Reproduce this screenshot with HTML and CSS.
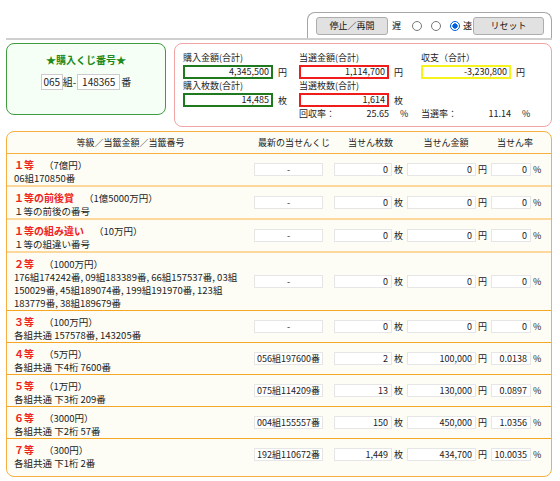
FILE: index.html
```html
<!DOCTYPE html>
<html lang="ja">
<head>
<meta charset="utf-8">
<title>宝くじシミュレーター</title>
<link rel="stylesheet" href="styles.css">
</head>
<body>
<div class="page">
  <div class="topbar">
    <div class="ctrl">
      <button class="btn">停止／再開</button>
      <span class="lbl slow">遅</span>
      <span class="radio first"></span>
      <span class="radio"></span>
      <span class="radio on"></span>
      <span class="lbl fast">速</span>
      <button class="btn reset">リセット</button>
    </div>
  </div>

  <div class="summary">
    <div class="ticket">
      <div class="ticket-title">★購入くじ番号★</div>
      <div class="ticket-num"><span class="tbox w1">065</span>組-<span class="tbox w2">148365</span>番</div>
    </div>
    <div class="stats">
      <div class="lab">購入金額(合計)</div>
      <div class="lab">当選金額(合計)</div>
      <div class="lab">収支（合計）</div>

      <div class="fr"><span class="fld green">4,345,500</span><span class="u">円</span></div>
      <div class="fr"><span class="fld red">1,114,700</span><span class="u">円</span></div>
      <div class="fr"><span class="fld yellow">-3,230,800</span><span class="u">円</span></div>

      <div class="lab">購入枚数(合計)</div>
      <div class="lab">当選枚数(合計)</div>
      <div></div>

      <div class="fr"><span class="fld green">14,485</span><span class="u">枚</span></div>
      <div class="fr"><span class="fld red">1,614</span><span class="u">枚</span></div>
      <div></div>

      <div></div>
      <div class="rate"><span class="rl">回収率：</span><span class="rv">25.65</span><span class="u">%</span></div>
      <div class="rate"><span class="rl">当選率：</span><span class="rv">11.14</span><span class="u">%</span></div>
    </div>
  </div>

  <div class="results">
    <div class="thead">
      <div class="h1">等級／当籤金額／当籤番号</div>
      <div class="h2">最新の当せんくじ</div>
      <div class="h3">当せん枚数</div>
      <div class="h4">当せん金額</div>
      <div class="h5">当せん率</div>
    </div>

    <div class="row light">
      <div class="prize"><div class="pt"><span class="grade">１等</span><span class="amt">（7億円）</span></div><div class="pn">06組170850番</div></div>
      <div class="c2"><span class="box b2">-</span></div>
      <div class="c3"><span class="box b3">0</span><span class="u">枚</span></div>
      <div class="c4"><span class="box b4">0</span><span class="u">円</span></div>
      <div class="c5"><span class="box b5">0</span><span class="u">%</span></div>
    </div>

    <div class="row light">
      <div class="prize"><div class="pt"><span class="grade">１等の前後賞</span><span class="amt">（1億5000万円）</span></div><div class="pn">１等の前後の番号</div></div>
      <div class="c2"><span class="box b2">-</span></div>
      <div class="c3"><span class="box b3">0</span><span class="u">枚</span></div>
      <div class="c4"><span class="box b4">0</span><span class="u">円</span></div>
      <div class="c5"><span class="box b5">0</span><span class="u">%</span></div>
    </div>

    <div class="row light">
      <div class="prize"><div class="pt"><span class="grade">１等の組み違い</span><span class="amt">（10万円）</span></div><div class="pn">１等の組違い番号</div></div>
      <div class="c2"><span class="box b2">-</span></div>
      <div class="c3"><span class="box b3">0</span><span class="u">枚</span></div>
      <div class="c4"><span class="box b4">0</span><span class="u">円</span></div>
      <div class="c5"><span class="box b5">0</span><span class="u">%</span></div>
    </div>

    <div class="row">
      <div class="prize"><div class="pt"><span class="grade">２等</span><span class="amt">（1000万円）</span></div><div class="pn">176組174242番, 09組183389番, 66組157537番, 03組150029番, 45組189074番, 199組191970番, 123組183779番, 38組189679番</div></div>
      <div class="c2"><span class="box b2">-</span></div>
      <div class="c3"><span class="box b3">0</span><span class="u">枚</span></div>
      <div class="c4"><span class="box b4">0</span><span class="u">円</span></div>
      <div class="c5"><span class="box b5">0</span><span class="u">%</span></div>
    </div>

    <div class="row">
      <div class="prize"><div class="pt"><span class="grade">３等</span><span class="amt">（100万円）</span></div><div class="pn">各組共通 157578番, 143205番</div></div>
      <div class="c2"><span class="box b2">-</span></div>
      <div class="c3"><span class="box b3">0</span><span class="u">枚</span></div>
      <div class="c4"><span class="box b4">0</span><span class="u">円</span></div>
      <div class="c5"><span class="box b5">0</span><span class="u">%</span></div>
    </div>

    <div class="row">
      <div class="prize"><div class="pt"><span class="grade">４等</span><span class="amt">（5万円）</span></div><div class="pn">各組共通 下4桁 7600番</div></div>
      <div class="c2"><span class="box b2">056組197600番</span></div>
      <div class="c3"><span class="box b3">2</span><span class="u">枚</span></div>
      <div class="c4"><span class="box b4">100,000</span><span class="u">円</span></div>
      <div class="c5"><span class="box b5">0.0138</span><span class="u">%</span></div>
    </div>

    <div class="row">
      <div class="prize"><div class="pt"><span class="grade">５等</span><span class="amt">（1万円）</span></div><div class="pn">各組共通 下3桁 209番</div></div>
      <div class="c2"><span class="box b2">075組114209番</span></div>
      <div class="c3"><span class="box b3">13</span><span class="u">枚</span></div>
      <div class="c4"><span class="box b4">130,000</span><span class="u">円</span></div>
      <div class="c5"><span class="box b5">0.0897</span><span class="u">%</span></div>
    </div>

    <div class="row">
      <div class="prize"><div class="pt"><span class="grade">６等</span><span class="amt">（3000円）</span></div><div class="pn">各組共通 下2桁 57番</div></div>
      <div class="c2"><span class="box b2">004組155557番</span></div>
      <div class="c3"><span class="box b3">150</span><span class="u">枚</span></div>
      <div class="c4"><span class="box b4">450,000</span><span class="u">円</span></div>
      <div class="c5"><span class="box b5">1.0356</span><span class="u">%</span></div>
    </div>

    <div class="row last">
      <div class="prize"><div class="pt"><span class="grade">７等</span><span class="amt">（300円）</span></div><div class="pn">各組共通 下1桁 2番</div></div>
      <div class="c2"><span class="box b2">192組110672番</span></div>
      <div class="c3"><span class="box b3">1,449</span><span class="u">枚</span></div>
      <div class="c4"><span class="box b4">434,700</span><span class="u">円</span></div>
      <div class="c5"><span class="box b5">10.0035</span><span class="u">%</span></div>
    </div>
  </div>
</div>
</body>
</html>
```

FILE: styles.css
```css
* { box-sizing: border-box; }

body {
  margin: 0;
  background: #fff;
  color: #222;
  font-family: "Noto Sans CJK JP", "Noto Sans", sans-serif;
  font-size: 9px;
}

.page {
  width: 560px;
  padding: 12px 8px 0 6px;
}

/* ---------- top control bar ---------- */
.topbar {
  display: flex;
  justify-content: flex-end;
  border-bottom: 2px solid #cfcfcf;
}

.ctrl {
  width: 245px;
  display: flex;
  align-items: center;
  height: 26px;
  padding: 0 0 0 8px;
  border: 1px solid #a6a6a6;
  border-bottom: none;
  border-radius: 8px 8px 0 0;
  background: #fff;
}

.ctrl > * { flex: none; }

.btn {
  width: 72px;
  height: 18px;
  margin: 0;
  padding: 0;
  border: 1px solid #adadad;
  border-radius: 3px;
  background: #e1e1e1;
  color: #111;
  font-family: inherit;
  font-size: 9px;
  line-height: 16px;
}

.btn.reset { margin-left: 1px; width: 71px; }

.lbl { width: 9px; font-size: 9px; line-height: 12px; color: #111; }
.lbl.slow { margin-left: 4px; }
.lbl.fast { margin-left: 3px; }

.radio {
  width: 10px;
  height: 10px;
  margin-left: 9px;
  border: 1px solid #777;
  border-radius: 50%;
  background: #fff;
}
.radio.first { margin-left: 11px; }
.radio.on {
  border-color: #0060df;
  background: radial-gradient(circle, #0060df 0 2.4px, #fff 2.9px);
}

/* ---------- summary ---------- */
.summary {
  display: flex;
  align-items: flex-start;
  gap: 8px;
  margin-top: 3px;
}

.ticket {
  flex: none;
  width: 160px;
  height: 72px;
  padding-top: 9px;
  border: 1px solid #3f9c3f;
  border-radius: 8px;
  background: #f6fff6;
  display: flex;
  flex-direction: column;
  align-items: center;
}

.ticket-title {
  color: #1c8a1c;
  font-weight: bold;
  font-size: 10px;
  line-height: 13px;
}

.ticket-num {
  margin-top: 8px;
  display: flex;
  align-items: center;
  font-size: 10px;
  line-height: 16px;
}

.tbox {
  height: 16px;
  border: 1px solid #cccccc;
  background: #fff;
  text-align: center;
  font-size: 10px;
  line-height: 14px;
}
.tbox.w1 { width: 22px; }
.tbox.w2 { width: 43px; margin-left: 1px; margin-right: 1px; }

.stats {
  flex: 1;
  height: 84px;
  padding: 7px 0 0 8px;
  border: 1px solid #f2a3a3;
  border-radius: 8px;
  background: #fff;
  display: grid;
  grid-template-columns: 116px 122px 1fr;
  grid-template-rows: repeat(5, 14px);
}

.lab { line-height: 14px; color: #222; }

.fr { display: flex; align-items: center; }

.fld {
  width: 90px;
  height: 14px;
  padding-right: 2px;
  border: 2px solid;
  background: #fff;
  text-align: right;
  line-height: 10px;
  color: #222;
}
.fld.green { border-color: #1f7a1f; }
.fld.red { border-color: #f01c1c; }
.fld.yellow { border-color: #f4f41c; }

.fr .u { margin-left: 5px; }

.rate { display: flex; align-items: center; line-height: 14px; }
.rate .rl { width: 40px; }
.rate .rv { width: 50px; text-align: right; }
.rate .u { margin-left: 11px; }

/* ---------- results table ---------- */
.results {
  margin-top: 4px;
  padding-bottom: 6px;
  border: 1px solid #f5b041;
  border-radius: 8px;
  background: #fdfdf5;
}

.thead, .row {
  display: grid;
  grid-template-columns: 247px 80px 73px 84px 1fr;
}

.thead {
  height: 22px;
  align-items: center;
  border-bottom: 1px solid #f5b041;
  text-align: center;
  line-height: 14px;
  color: #222;
}
.thead .h4 { padding-right: 6px; }
.thead .h5 { padding-right: 12px; }

.row { border-bottom: 1px solid #f5a623; }
.row.light { border-bottom: 2px solid #fcd89c; }
.row.last { border-bottom: none; }

.prize { padding: 4px 6px 0 7px; }

.pt {
  height: 14px;
  display: flex;
  align-items: baseline;
  white-space: nowrap;
  line-height: 14px;
}

.grade {
  color: #f02323;
  font-weight: bold;
  font-size: 10px;
}

.amt {
  margin-left: 10px;
  color: #222;
  font-size: 9.5px;
}

.pn { font-size: 9.5px; line-height: 13px; color: #222; }

.c2, .c3, .c4, .c5 {
  display: flex;
  align-items: center;
}

.box {
  height: 13px;
  padding-right: 3px;
  border: 1px solid #e6e6e6;
  background: #fff;
  text-align: right;
  line-height: 11px;
  white-space: nowrap;
  color: #222;
}
.b2 { width: 69px; padding-right: 0; text-align: center; }
.b3 { width: 58px; }
.b4 { width: 69px; }
.b5 { width: 40px; }

.c3 .u, .c4 .u, .c5 .u { margin-left: 2px; line-height: 13px; }
```
